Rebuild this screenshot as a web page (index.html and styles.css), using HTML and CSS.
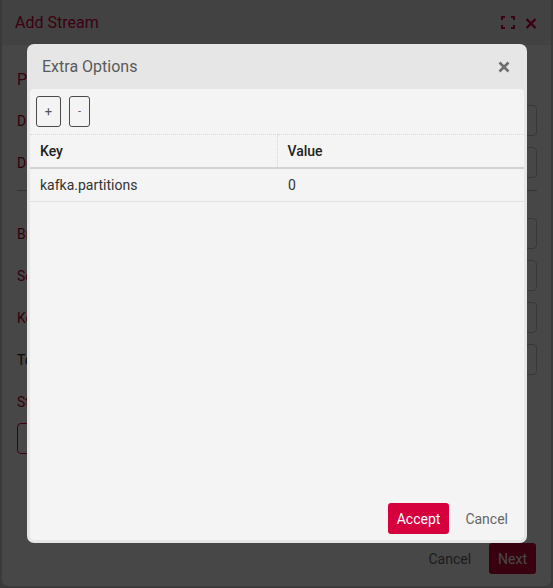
FILE: index.html
```html
<!DOCTYPE html>
<html>
<head>
<meta charset="utf-8">
<link rel="stylesheet" href="styles.css">
</head>
<body>
<div class="page">
  <div class="dialog">
    <div class="dialog-header">
      <span class="dialog-title">Add Stream</span>
      <div class="dialog-icons">
        <svg class="icon-expand" width="14" height="13" viewBox="0 0 14 13"><path d="M1 4V1H4M10 1H13V4M13 9V12H10M4 12H1V9" fill="none" stroke="#d6003f" stroke-width="2"/></svg>
        <svg class="icon-x" width="12" height="11" viewBox="0 0 12 11"><path d="M1.5 1L10.5 10M10.5 1L1.5 10" stroke="#d6003f" stroke-width="2.4"/></svg>
      </div>
    </div>
    <div class="dialog-body">
      <div class="section-title">Properties</div>
      <div class="field"><label class="flabel">Display Name</label><div class="finput"></div></div>
      <div class="field"><label class="flabel">Description</label><div class="finput"></div></div>
      <hr class="divider">
      <div class="field"><label class="flabel">Brokers</label><div class="finput"></div></div>
      <div class="field"><label class="flabel">Schema Registry</label><div class="finput"></div></div>
      <div class="field"><label class="flabel">Key Serializer</label><div class="finput"></div></div>
      <div class="field"><label class="flabel grey">Topic</label><div class="finput"></div></div>
      <div class="field"><label class="flabel">Stream Options</label></div>
      <button class="outline-btn">Extra Options</button>
    </div>
    <div class="dialog-footer">
      <button class="text-btn">Cancel</button>
      <button class="primary-btn dark">Next</button>
    </div>
  </div>
  <div class="overlay"></div>
  <div class="modal">
    <div class="modal-header">
      <span class="modal-title">Extra Options</span>
      <svg class="modal-close" width="12" height="12" viewBox="0 0 12 12"><path d="M1.5 1.5L10.5 10.5M10.5 1.5L1.5 10.5" stroke="#6e6e6e" stroke-width="2.6"/></svg>
    </div>
    <div class="modal-body">
      <div class="toolbar">
        <button class="small-btn plus">+</button>
        <button class="small-btn minus">-</button>
      </div>
      <table class="kv-table">
        <thead>
          <tr><th>Key</th><th>Value</th></tr>
        </thead>
        <tbody>
          <tr><td>kafka.partitions</td><td>0</td></tr>
        </tbody>
      </table>
      <div class="spacer"></div>
      <div class="modal-footer">
        <button class="primary-btn">Accept</button>
        <button class="text-btn">Cancel</button>
      </div>
    </div>
  </div>
</div>
</body>
</html>
```
FILE: styles.css
```css
* { box-sizing: border-box; }
html, body { margin: 0; padding: 0; }
body {
  font-family: Roboto, "Liberation Sans", sans-serif;
  width: 553px;
  height: 588px;
  overflow: hidden;
  background: #d0d0d0;
}
.page {
  position: relative;
  width: 553px;
  height: 588px;
  padding: 0 2px 2px 2px;
}
.dialog {
  height: 586px;
  background: #ffffff;
  border-radius: 0 0 6px 6px;
  display: flex;
  flex-direction: column;
  overflow: hidden;
}
.dialog-header {
  height: 45px;
  flex: none;
  background: #ececec;
  display: flex;
  align-items: center;
  justify-content: space-between;
  padding: 0 14px 0 13px;
}
.dialog-title {
  font-size: 16px;
  color: #d6003f;
}
.dialog-icons {
  display: flex;
  align-items: center;
  gap: 10px;
}
.icon-x { margin-top: 1px; }
.dialog-body {
  flex: 1;
  padding: 25px 14px 0 15px;
  display: flex;
  flex-direction: column;
}
.section-title {
  font-size: 16px;
  line-height: 20px;
  color: #d6003f;
  margin-bottom: 15px;
}
.field {
  display: flex;
  align-items: center;
  height: 31px;
  margin-bottom: 11px;
}
.flabel {
  width: 170px;
  flex: none;
  font-size: 14px;
  color: #b0002f;
}
.flabel.grey { color: #222; }
.finput {
  flex: 1;
  height: 31px;
  border: 1px solid #c8c8c8;
  border-radius: 4px;
}
.divider {
  border: none;
  border-top: 1px solid #bbbbbb;
  margin: 1px 0 27px 0;
}
.outline-btn {
  align-self: flex-start;
  height: 31px;
  padding: 0 14px;
  border: 1px solid #d6003f;
  border-radius: 4px;
  background: #fff;
  color: #d6003f;
  font-family: inherit;
  font-size: 14px;
  margin-top: -5px;
}
.dialog-footer {
  flex: none;
  display: flex;
  justify-content: flex-end;
  align-items: center;
  gap: 6px;
  padding: 0 15px 12px 0;
}
.overlay {
  position: absolute;
  inset: 0;
  background: rgba(0, 0, 0, 0.72);
}
.modal {
  position: absolute;
  left: 27px;
  top: 44px;
  width: 500px;
  height: 499px;
  background: #e6e6e6;
  border-radius: 7px;
  display: flex;
  flex-direction: column;
  padding: 0 3px 3px 3px;
}
.modal-header {
  height: 45px;
  flex: none;
  display: flex;
  align-items: center;
  justify-content: space-between;
  padding: 0 14px 0 12px;
}
.modal-title {
  font-size: 16px;
  color: #5a5a5a;
}
.modal-body {
  flex: 1;
  background: #f4f4f4;
  border-radius: 4px;
  display: flex;
  flex-direction: column;
}
.toolbar {
  display: flex;
  gap: 8px;
  padding: 7px 7px 7px 6px;
}
.small-btn {
  height: 31px;
  border: 1px solid #4a4a4a;
  border-radius: 3px;
  background: transparent;
  color: #555;
  font-family: inherit;
  font-size: 13px;
  padding: 0;
}
.small-btn.plus { width: 25px; }
.small-btn.minus { width: 21px; font-size: 11px; }
.kv-table {
  width: 100%;
  border-collapse: collapse;
  table-layout: fixed;
  font-size: 14px;
}
.kv-table th {
  text-align: left;
  font-weight: 500;
  color: #222;
  height: 33px;
  padding: 0 10px;
  border-top: 1px dotted #d8d8d8;
  border-bottom: 2px solid #d2d2d2;
}
.kv-table th + th {
  border-left: 1px dotted #d8d8d8;
}
.kv-table td {
  height: 34px;
  padding: 0 10px;
  color: #333;
  border-bottom: 1px solid #e2e2e2;
}
.kv-table td + td { padding-left: 11px; }
.spacer { flex: 1; }
.modal-footer {
  display: flex;
  justify-content: flex-end;
  align-items: center;
  gap: 4px;
  padding: 0 4px 6px 0;
}
.primary-btn {
  height: 31px;
  padding: 0 9px;
  border: none;
  border-radius: 3px;
  background: #d6003f;
  color: #fff;
  font-family: inherit;
  font-size: 14px;
}
.primary-btn.dark { background: #c8073c; padding: 0 9px; }
.text-btn {
  height: 31px;
  padding: 0 12px;
  border: none;
  background: transparent;
  color: #666;
  font-family: inherit;
  font-size: 14px;
}
```
